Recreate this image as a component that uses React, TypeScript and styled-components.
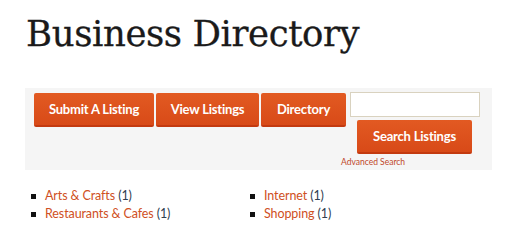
import React from "react";
import styled, { createGlobalStyle } from "styled-components";

const GlobalStyle = createGlobalStyle`
  html, body {
    margin: 0;
    padding: 0;
    background: #ffffff;
  }
`;

const Page = styled.div`
  width: 520px;
  height: 245px;
  padding: 14px 0 0 25px;
  box-sizing: border-box;
  overflow: hidden;
`;

const Title = styled.h1`
  margin: 0 0 0 1px;
  font-family: "DejaVu Serif", serif;
  font-weight: normal;
  font-size: 35.5px;
  line-height: 40px;
  color: #1a1a1a;
  letter-spacing: -0.4px;
  -webkit-text-stroke: 0.3px #1a1a1a;
`;

const Panel = styled.div`
  margin-top: 34px;
  width: 467px;
  height: 82px;
  background: #f5f5f5;
  box-sizing: border-box;
  padding: 4px 0 0 9px;
  display: flex;
  gap: 2px;
  align-items: flex-start;
`;

const Button = styled.button<{ $width: number }>`
  width: ${(p) => p.$width}px;
  height: 34px;
  margin-top: 1px;
  border: none;
  border-bottom: 2px solid #c33a10;
  border-radius: 2px;
  background: linear-gradient(#e25a22, #d84a18);
  color: #fff;
  font-family: Lato, sans-serif;
  font-weight: 700;
  font-size: 13px;
  letter-spacing: -0.2px;
  padding: 0;
  cursor: pointer;
`;

const SearchBox = styled.div`
  margin-left: 2px;
  display: flex;
  flex-direction: column;
  align-items: flex-end;
`;

const SearchInput = styled.input`
  width: 130px;
  height: 25px;
  box-sizing: border-box;
  border: 1px solid #d9d2bf;
  background: #fff;
`;

const SearchColumn = styled.div`
  display: flex;
  flex-direction: column;
  align-items: center;
  margin-right: 8px;
  margin-top: 2px;
`;

const Advanced = styled.a`
  margin-top: 3px;
  margin-left: -9px;
  align-self: flex-start;
  font-family: Lato, sans-serif;
  font-size: 8.5px;
  color: #c0472a;
  text-decoration: none;
`;

const Categories = styled.ul`
  margin: 18px 0 0 0;
  padding: 0;
  list-style: none;
  display: grid;
  grid-template-columns: 219px 200px;
  row-gap: 2px;
`;

const Item = styled.li`
  position: relative;
  padding-left: 20px;
  font-family: Lato, sans-serif;
  font-size: 12.5px;
  letter-spacing: -0.1px;
  line-height: 16px;
  color: #2f4050;
  &::before {
    content: "";
    position: absolute;
    left: 6px;
    top: 6px;
    width: 5px;
    height: 5px;
    background: #111;
  }
`;

const Link = styled.a`
  color: #cf4f23;
  text-decoration: none;
`;

const categories = [
  { name: "Arts & Crafts", count: 1 },
  { name: "Internet", count: 1 },
  { name: "Restaurants & Cafes", count: 1 },
  { name: "Shopping", count: 1 },
];

export default function App() {
  return (
    <>
      <GlobalStyle />
      <Page>
        <Title>Business Directory</Title>
        <Panel>
          <Button $width={120}>Submit A Listing</Button>
          <Button $width={103}>View Listings</Button>
          <Button $width={85}>Directory</Button>
          <SearchBox>
            <SearchInput type="text" />
            <SearchColumn>
              <Button $width={115}>Search Listings</Button>
            </SearchColumn>
            <Advanced href="#">Advanced Search</Advanced>
          </SearchBox>
        </Panel>
        <Categories>
          {categories.map((c) => (
            <Item key={c.name}>
              <Link href="#">{c.name}</Link> ({c.count})
            </Item>
          ))}
        </Categories>
      </Page>
    </>
  );
}
